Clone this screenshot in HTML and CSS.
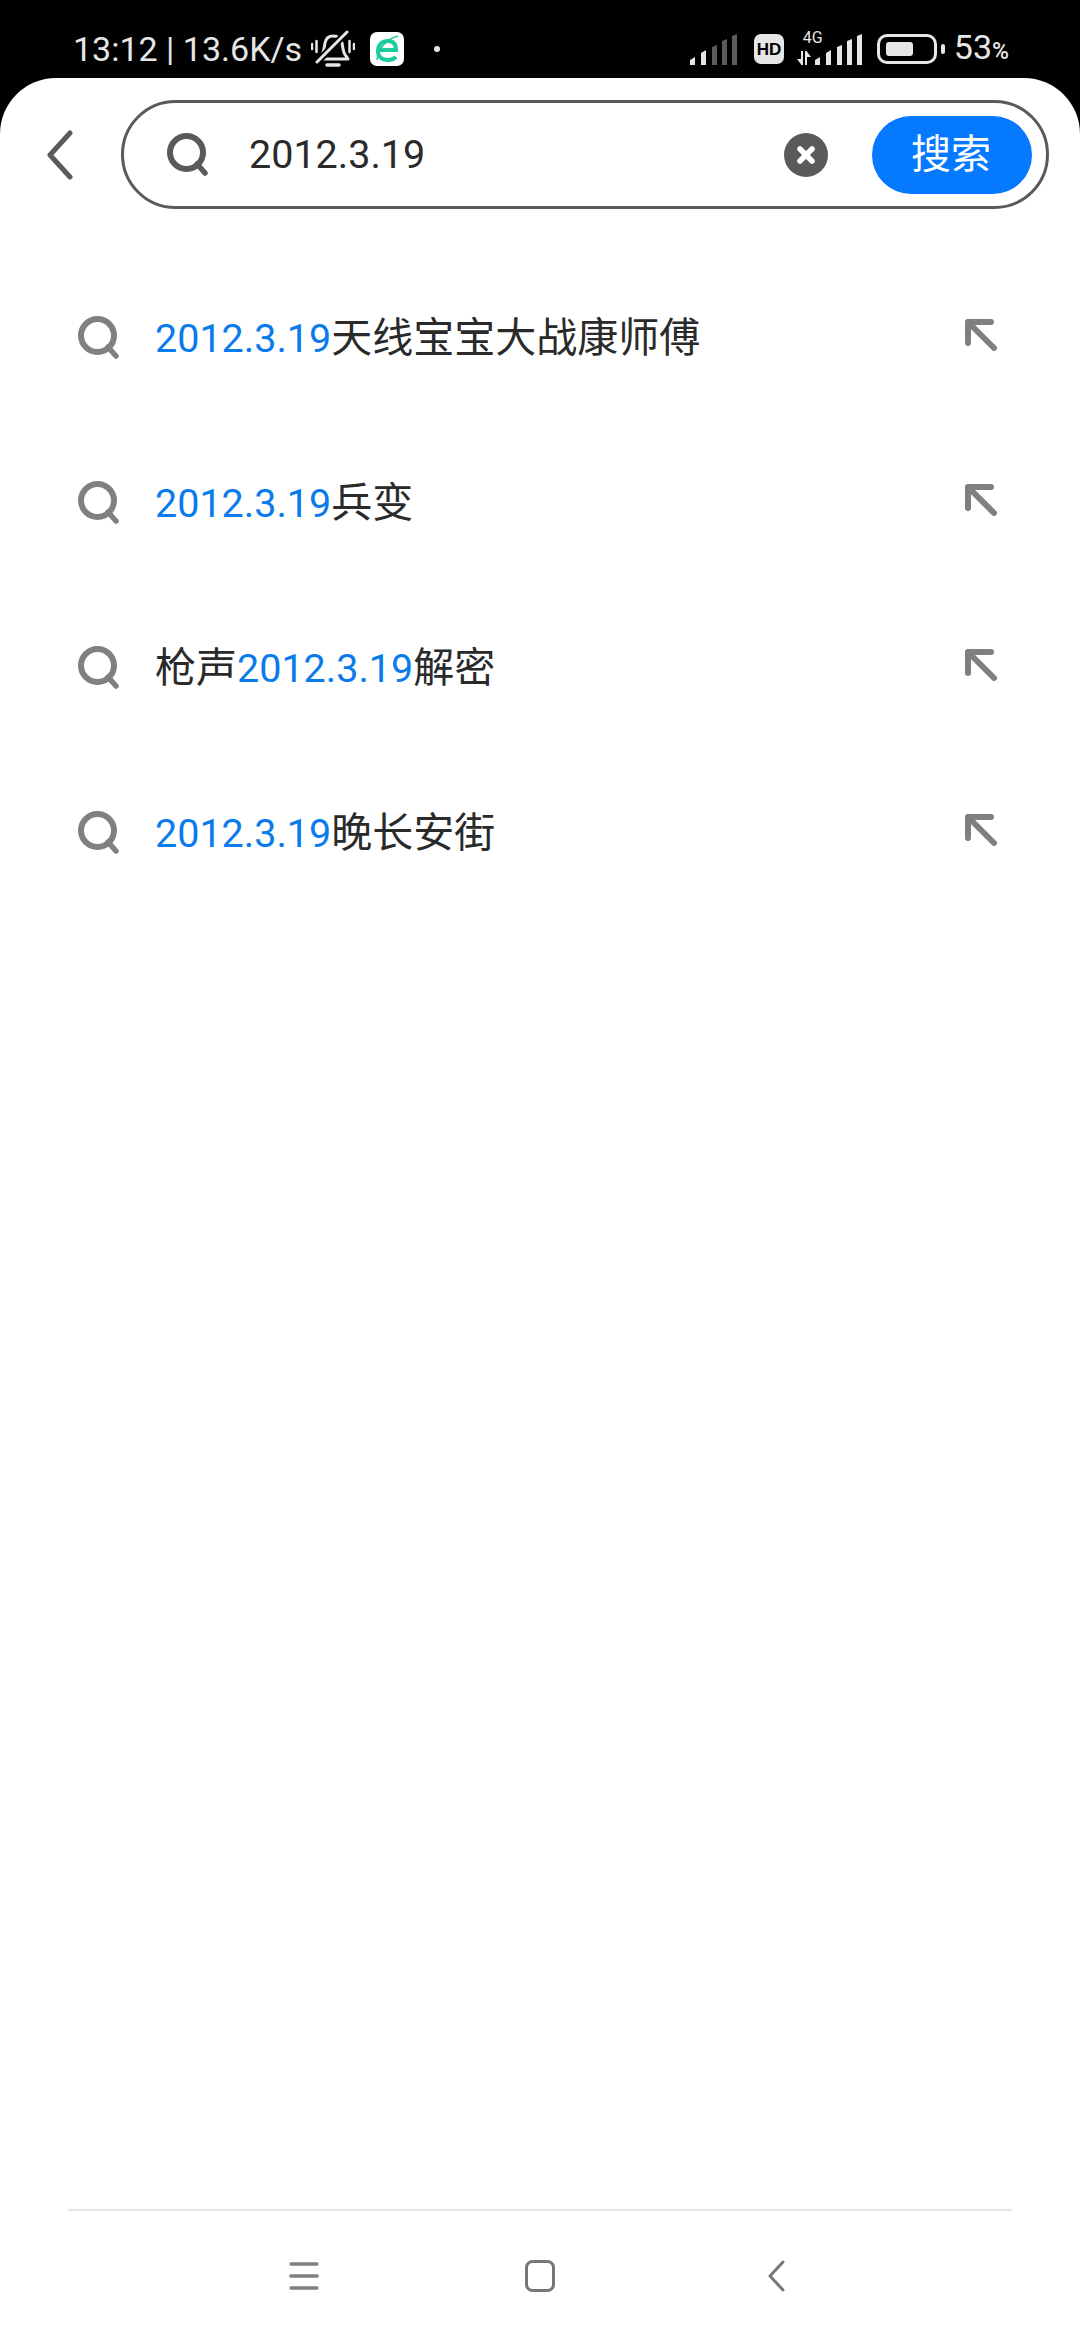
FILE: index.html
```html
<!DOCTYPE html>
<html lang="zh-CN">
<head>
  <meta charset="UTF-8">
  <meta name="viewport" content="width=device-width, initial-scale=1.0">
  <title>搜索</title>
  <link rel="stylesheet" href="styles.css">
</head>
<body>
  <svg class="icon-defs" xmlns="http://www.w3.org/2000/svg">
    <symbol id="icon-search" viewBox="0 0 42 44">
      <circle cx="19.500" cy="19.500" r="16.500" fill="none" stroke="currentColor" stroke-width="6"/>
      <line x1="30" y1="31" x2="38" y2="40" stroke="currentColor" stroke-width="5.500" stroke-linecap="round"/>
    </symbol>
    <symbol id="icon-fill" viewBox="0 0 32 32">
      <path d="M3 24V3H26M3 3L29 29" fill="none" stroke="currentColor" stroke-width="6" stroke-linecap="round" stroke-linejoin="round"/>
    </symbol>
  </svg>

  <div class="status-bar">
    <div class="status-left">
      <span class="status-text">13:12 | 13.6K/s</span>
      <svg class="bell" viewBox="0 0 44 38" fill="none" stroke="#e6e6e6" stroke-linecap="round">
        <path d="M10 26c3-3 3-8 4-13 1-5 4-7 8-7s8 2 9 7c1 5 1 10 4 13l2 3H8z" stroke-width="3" stroke-linejoin="round"/>
        <path d="M16 35h12" stroke-width="3.500"/>
        <path d="M6 32L36 2" stroke="#000" stroke-width="7"/>
        <path d="M6 32L36 2" stroke-width="3"/>
        <path d="M1 14v5M5.500 11v11M38.500 11v11M43 14v5" stroke-width="2.500"/>
      </svg>
      <svg class="app-icon" viewBox="0 0 34 34">
        <rect width="34" height="34" rx="7" fill="#fff"/>
        <path d="M9 18h17c0-6-3-9-8-9-6 0-10 4-10 10s4 9 10 9c4 0 6-1 8-3" fill="none" stroke="#1ecb9f" stroke-width="4"/>
        <path d="M7 28C8 17 16 7 28 4" fill="none" stroke="#1ecb9f" stroke-width="1.500"/>
      </svg>
      <span class="status-dot"></span>
    </div>
    <div class="status-right">
      <svg class="signal" viewBox="0 0 48 32">
        <path d="M0 32v-5l5-3v8zM11 32V20l5-3v15z" fill="#e6e6e6"/>
        <path d="M22 32V14l5-2v20zM32 32V8l5-2v26zM42 32V3l5-2v31z" fill="#5c5c5c"/>
      </svg>
      <svg class="hd" viewBox="0 0 30 30">
        <rect width="30" height="30" rx="7" fill="#e6e6e6"/>
        <text x="15" y="21" text-anchor="middle" class="hd-text">HD</text>
      </svg>
      <div class="net">
        <span class="net-label">4G</span>
        <svg class="net-arrows" viewBox="0 0 14 14" fill="#e6e6e6">
          <path d="M4 0h2v14H4.500L0 8h4zM8 0h1.500L14 6h-4v8H8z"/>
        </svg>
        <svg class="net-bars" viewBox="0 0 48 32" fill="#e6e6e6">
          <path d="M0 32v-5l5-3v8zM11 32V20l5-3v15zM22 32V14l5-2v20zM32 32V8l5-2v26zM42 32V3l5-2v31z"/>
        </svg>
      </div>
      <div class="battery">
        <span class="battery-level"></span>
      </div>
      <span class="battery-tip"></span>
      <span class="status-text battery-num">53<small>%</small></span>
    </div>
  </div>

  <div class="sheet">
    <div class="search-row">
      <svg class="back" viewBox="0 0 26 50">
        <path d="M23 3L3 25l20 22" fill="none" stroke="#5a5a5a" stroke-width="5" stroke-linecap="round" stroke-linejoin="round"/>
      </svg>
      <div class="search-box">
        <svg class="search-icon"><use href="#icon-search"/></svg>
        <span class="search-input">2012.3.19</span>
        <svg class="clear" viewBox="0 0 44 44">
          <circle cx="22" cy="22" r="22" fill="#5a5a5a"/>
          <path d="M16 16l12 12M28 16L16 28" stroke="#fff" stroke-width="5.500" stroke-linecap="round"/>
        </svg>
        <div class="search-btn">搜索</div>
      </div>
    </div>

    <ul class="suggest-list">
      <li class="suggest-item">
        <svg class="suggest-icon"><use href="#icon-search"/></svg>
        <span class="suggest-text"><em>2012.3.19</em>天线宝宝大战康师傅</span>
        <svg class="fill-icon"><use href="#icon-fill"/></svg>
      </li>
      <li class="suggest-item">
        <svg class="suggest-icon"><use href="#icon-search"/></svg>
        <span class="suggest-text"><em>2012.3.19</em>兵变</span>
        <svg class="fill-icon"><use href="#icon-fill"/></svg>
      </li>
      <li class="suggest-item">
        <svg class="suggest-icon"><use href="#icon-search"/></svg>
        <span class="suggest-text">枪声<em>2012.3.19</em>解密</span>
        <svg class="fill-icon"><use href="#icon-fill"/></svg>
      </li>
      <li class="suggest-item">
        <svg class="suggest-icon"><use href="#icon-search"/></svg>
        <span class="suggest-text"><em>2012.3.19</em>晚长安街</span>
        <svg class="fill-icon"><use href="#icon-fill"/></svg>
      </li>
    </ul>

    <div class="nav-bar">
      <svg class="nav-menu" viewBox="0 0 30 30">
        <path d="M2 3h26M2 15h26M2 27h26" stroke="#808080" stroke-width="3.500" stroke-linecap="round"/>
      </svg>
      <svg class="nav-home" viewBox="0 0 30 32">
        <rect x="1.500" y="1.500" width="27" height="29" rx="6" fill="none" stroke="#777" stroke-width="3"/>
      </svg>
      <svg class="nav-back" viewBox="0 0 17 32">
        <path d="M15 2L2 16l13 14" fill="none" stroke="#777" stroke-width="3" stroke-linecap="round" stroke-linejoin="round"/>
      </svg>
    </div>
  </div>
</body>
</html>
```
FILE: styles.css
```css
:root {
  --blue: #0a7bea;
  --btn-blue: #0579ff;
  --text: #2a2a2a;
  --icon: #808080;
  --icon-dark: #5a5a5a;
  --font-sans: Roboto, "Noto Sans CJK SC", sans-serif;
}

* {
  box-sizing: border-box;
  margin: 0;
  padding: 0;
}

html, body {
  height: 2340px;
}

body {
  display: flex;
  flex-direction: column;
  background-color: #000;
  font-family: var(--font-sans);
  color: var(--text);
  overflow: hidden;
}

.icon-defs {
  display: none;
}

/* Status bar */
.status-bar {
  display: flex;
  flex-shrink: 0;
  justify-content: space-between;
  align-items: center;
  height: 78px;
  padding: 20px 71px 0 73px;
  color: #e6e6e6;
}

.status-left,
.status-right {
  display: flex;
  align-items: center;
}

.status-text {
  font-size: 34px;
  line-height: 38px;
}

.bell {
  width: 44px;
  height: 38px;
  margin-left: 9px;
}

.app-icon {
  width: 34px;
  height: 34px;
  margin-left: 15px;
}

.status-dot {
  width: 6px;
  height: 6px;
  margin-left: 30px;
  border-radius: 50%;
  background-color: #e6e6e6;
}

.signal {
  width: 48px;
  height: 32px;
}

.hd {
  width: 30px;
  height: 30px;
  margin-left: 16px;
}

.hd-text {
  font-family: "Liberation Sans", sans-serif;
  font-size: 17px;
  font-weight: 700;
  fill: #000;
}

.net {
  position: relative;
  display: flex;
  align-items: flex-end;
  width: 66px;
  height: 32px;
  margin-left: 13px;
}

.net-label {
  position: absolute;
  top: -3px;
  left: 6px;
  font-size: 16px;
  line-height: 16px;
}

.net-arrows {
  width: 14px;
  height: 14px;
}

.net-bars {
  width: 48px;
  height: 32px;
  margin-left: 4px;
}

.battery {
  width: 60px;
  height: 30px;
  margin-left: 14px;
  padding: 5px 6px;
  border: 3px solid #e6e6e6;
  border-radius: 10px;
}

.battery-level {
  display: block;
  width: 27px;
  height: 14px;
  border-radius: 3px;
  background-color: #e6e6e6;
}

.battery-tip {
  width: 4px;
  height: 10px;
  margin-left: 4px;
  border-radius: 2px;
  background-color: #e6e6e6;
}

.battery-num {
  margin-left: 9px;
}

.battery-num small {
  font-size: 23px;
  font-weight: 500;
}

/* White sheet */
.sheet {
  display: flex;
  flex: 1;
  flex-direction: column;
  background-color: #fff;
  border-radius: 56px 56px 0 0;
}

.search-row {
  display: flex;
  align-items: center;
  padding: 22px 31px 0 47px;
}

.back {
  width: 26px;
  height: 50px;
  flex-shrink: 0;
}

.search-box {
  display: flex;
  flex: 1;
  align-items: center;
  height: 109px;
  margin-left: 48px;
  padding: 0 14px 0 43px;
  border: 3px solid var(--icon-dark);
  border-radius: 55px;
}

.search-icon {
  width: 42px;
  height: 44px;
  color: var(--icon-dark);
}

.search-input {
  flex: 1;
  margin-left: 40px;
  font-size: 39.500px;
  line-height: 46px;
}

.clear {
  width: 44px;
  height: 44px;
  margin-right: 1px;
}

.search-btn {
  width: 160px;
  height: 78px;
  margin-left: 43px;
  padding-right: 2px;
  border-radius: 39px;
  background-color: var(--btn-blue);
  color: #fff;
  font-size: 40px;
  line-height: 78px;
  text-align: center;
}

/* Suggestions */
.suggest-list {
  margin-top: 46px;
  list-style: none;
}

.suggest-item {
  display: flex;
  align-items: center;
  height: 165px;
  padding: 0 83px 0 78px;
}

.suggest-icon {
  width: 42px;
  height: 44px;
  flex-shrink: 0;
  color: var(--icon);
}

.suggest-text {
  flex: 1;
  margin-left: 35px;
  padding-top: 2px;
  font-size: 41px;
  line-height: 50px;
}

.suggest-text em {
  color: var(--blue);
  font-size: 39.500px;
  font-style: normal;
}

.fill-icon {
  width: 32px;
  height: 32px;
  margin-bottom: 6px;
  color: var(--icon);
}

/* Bottom nav */
.nav-bar {
  display: flex;
  align-items: center;
  gap: 206px;
  height: 131px;
  margin: auto 68px 0;
  padding-left: 221px;
  border-top: 2px solid #e6e6e6;
}

.nav-menu {
  width: 30px;
  height: 30px;
}

.nav-home {
  width: 30px;
  height: 32px;
}

.nav-back {
  width: 17px;
  height: 32px;
  margin-left: 7px;
}
```
